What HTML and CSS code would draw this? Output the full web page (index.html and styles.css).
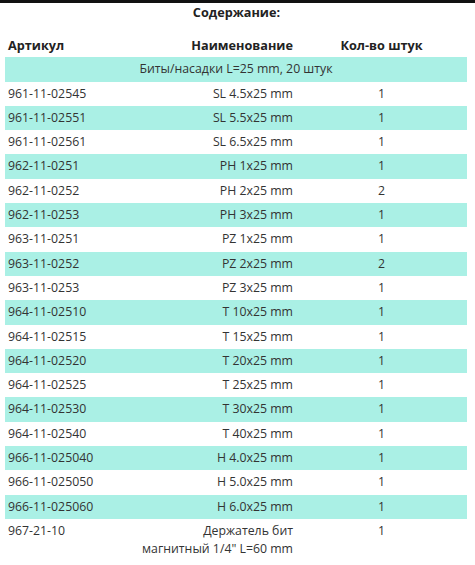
FILE: index.html
```html
<!DOCTYPE html>
<html lang="ru">
<head>
<meta charset="utf-8">
<link rel="stylesheet" href="styles.css">
</head>
<body>
<div class="topbar"></div>
<div class="wrap">
  <div class="title">Содержание:</div>
  <table class="spec">
    <colgroup>
      <col class="c1"><col class="c2"><col class="c3">
    </colgroup>
    <thead>
      <tr><th class="art">Артикул</th><th class="name">Наименование</th><th class="qty">Кол-во штук</th></tr>
    </thead>
    <tbody>
      <tr class="alt"><td colspan="3" class="group">Биты/насадки L=25 mm, 20 штук</td></tr>
      <tr><td class="art">961-11-02545</td><td class="name">SL 4.5x25 mm</td><td class="qty">1</td></tr>
      <tr class="alt"><td class="art">961-11-02551</td><td class="name">SL 5.5x25 mm</td><td class="qty">1</td></tr>
      <tr><td class="art">961-11-02561</td><td class="name">SL 6.5x25 mm</td><td class="qty">1</td></tr>
      <tr class="alt"><td class="art">962-11-0251</td><td class="name">PH 1x25 mm</td><td class="qty">1</td></tr>
      <tr><td class="art">962-11-0252</td><td class="name">PH 2x25 mm</td><td class="qty">2</td></tr>
      <tr class="alt"><td class="art">962-11-0253</td><td class="name">PH 3x25 mm</td><td class="qty">1</td></tr>
      <tr><td class="art">963-11-0251</td><td class="name">PZ 1x25 mm</td><td class="qty">1</td></tr>
      <tr class="alt"><td class="art">963-11-0252</td><td class="name">PZ 2x25 mm</td><td class="qty">2</td></tr>
      <tr><td class="art">963-11-0253</td><td class="name">PZ 3x25 mm</td><td class="qty">1</td></tr>
      <tr class="alt"><td class="art">964-11-02510</td><td class="name">T 10x25 mm</td><td class="qty">1</td></tr>
      <tr><td class="art">964-11-02515</td><td class="name">T 15x25 mm</td><td class="qty">1</td></tr>
      <tr class="alt"><td class="art">964-11-02520</td><td class="name">T 20x25 mm</td><td class="qty">1</td></tr>
      <tr><td class="art">964-11-02525</td><td class="name">T 25x25 mm</td><td class="qty">1</td></tr>
      <tr class="alt"><td class="art">964-11-02530</td><td class="name">T 30x25 mm</td><td class="qty">1</td></tr>
      <tr><td class="art">964-11-02540</td><td class="name">T 40x25 mm</td><td class="qty">1</td></tr>
      <tr class="alt"><td class="art">966-11-025040</td><td class="name">H 4.0x25 mm</td><td class="qty">1</td></tr>
      <tr><td class="art">966-11-025050</td><td class="name">H 5.0x25 mm</td><td class="qty">1</td></tr>
      <tr class="alt"><td class="art">966-11-025060</td><td class="name">H 6.0x25 mm</td><td class="qty">1</td></tr>
      <tr><td class="art">967-21-10</td><td class="name">Держатель бит<br>магнитный 1/4" L=60 mm</td><td class="qty">1</td></tr>
    </tbody>
  </table>
</div>
</body>
</html>
```
FILE: styles.css
```css
html, body {
  margin: 0;
  padding: 0;
  background: #ffffff;
}
body {
  font-family: "Open Sans", "Liberation Sans", sans-serif;
  font-size: 12.3px;
  color: #333333;
}
.topbar {
  height: 3px;
  background: #111111;
}
.wrap {
  padding: 0 8px 0 5px;
}
.title {
  text-align: center;
  font-weight: bold;
  font-size: 12.7px;
  line-height: 18px;
  color: #222222;
  margin-bottom: 12px;
  padding-left: 1px;
}
.spec {
  width: 462px;
  border-collapse: collapse;
  table-layout: fixed;
}
.c1 { width: 120px; }
.c2 { width: 171px; }
.c3 { width: 171px; }
.spec th,
.spec td {
  padding: 3px;
  line-height: 18.3px;
  vertical-align: top;
}
.spec th {
  font-weight: bold;
  font-size: 12.7px;
  color: #222222;
}
.art { text-align: left; }
.name { text-align: right; }
.qty { text-align: center; }
.group { text-align: center; }
.alt td {
  background: #aaf0e5;
}
```
